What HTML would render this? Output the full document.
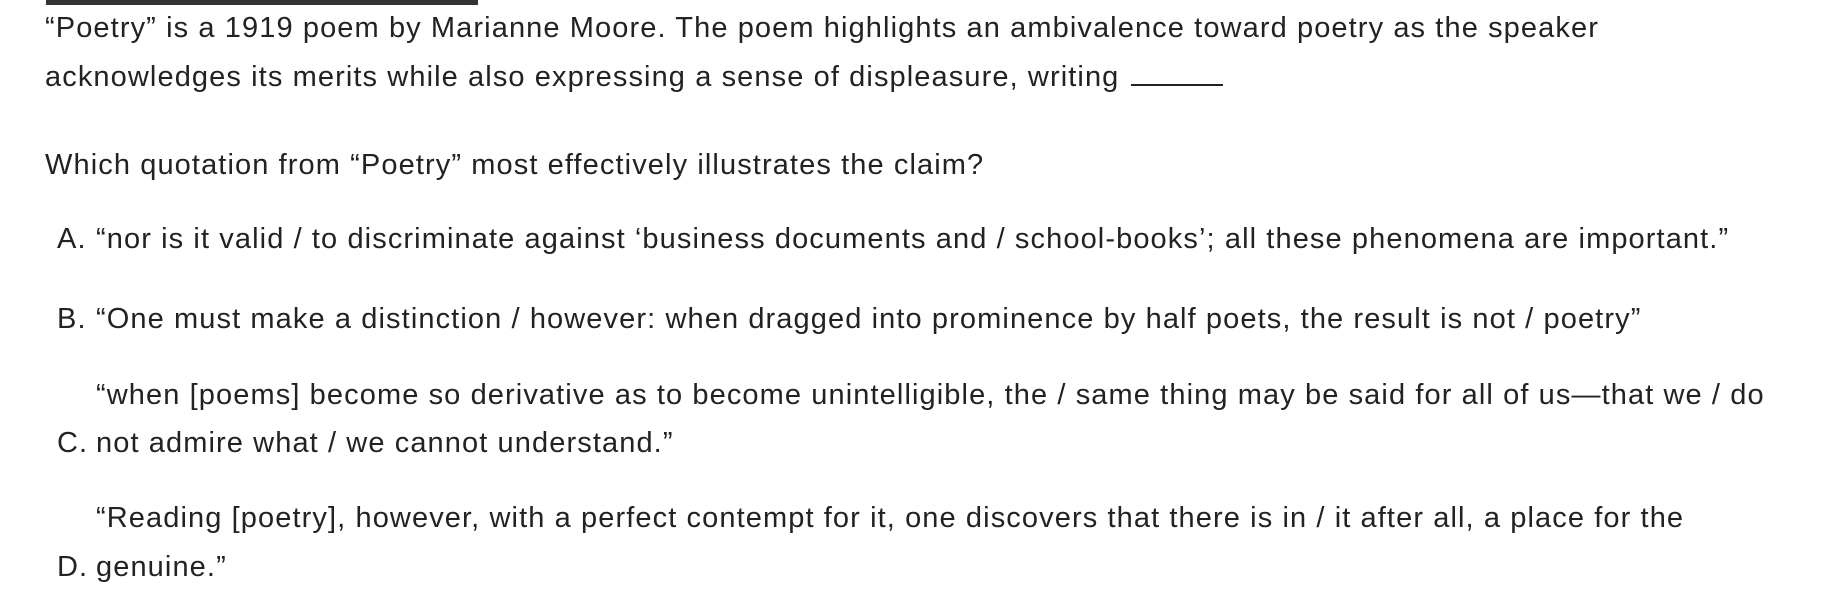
<!DOCTYPE html>
<html><head><meta charset="utf-8"><style>
body{margin:0;width:1836px;height:613px;background:#fff;position:relative;overflow:hidden;font-family:"Liberation Sans",Arial,sans-serif;font-size:29px;color:#222;letter-spacing:1.1px}
.l{position:absolute;line-height:28px;white-space:nowrap}
.bar{position:absolute;left:46px;top:0;width:432px;height:5px;background:#333}
.u{display:inline-block;width:92px;border-bottom:2px solid #222;height:24px;vertical-align:baseline;margin-left:2px}
</style></head><body>
<div class="bar"></div>
<div class="l" style="left:45px;top:14px">“Poetry” is a 1919 poem by Marianne Moore. The poem highlights an ambivalence toward poetry as the speaker</div>
<div class="l" style="left:45px;top:60px">acknowledges its merits while also expressing a sense of displeasure, writing <span class="u"></span></div>
<div class="l" style="left:45px;top:151px">Which quotation from “Poetry” most effectively illustrates the claim?</div>
<div class="l" style="left:57px;top:225px">A.</div>
<div class="l" style="left:96px;top:225px">“nor is it valid / to discriminate against ‘business documents and / school-books’; all these phenomena are important.”</div>
<div class="l" style="left:57px;top:305px">B.</div>
<div class="l" style="left:96px;top:305px">“One must make a distinction / however: when dragged into prominence by half poets, the result is not / poetry”</div>
<div class="l" style="left:96px;top:381px">“when [poems] become so derivative as to become unintelligible, the / same thing may be said for all of us—that we / do</div>
<div class="l" style="left:57px;top:429px">C.</div>
<div class="l" style="left:96px;top:429px">not admire what / we cannot understand.”</div>
<div class="l" style="left:96px;top:504px">“Reading [poetry], however, with a perfect contempt for it, one discovers that there is in / it after all, a place for the</div>
<div class="l" style="left:57px;top:553px">D.</div>
<div class="l" style="left:96px;top:553px">genuine.”</div>
</body></html>
